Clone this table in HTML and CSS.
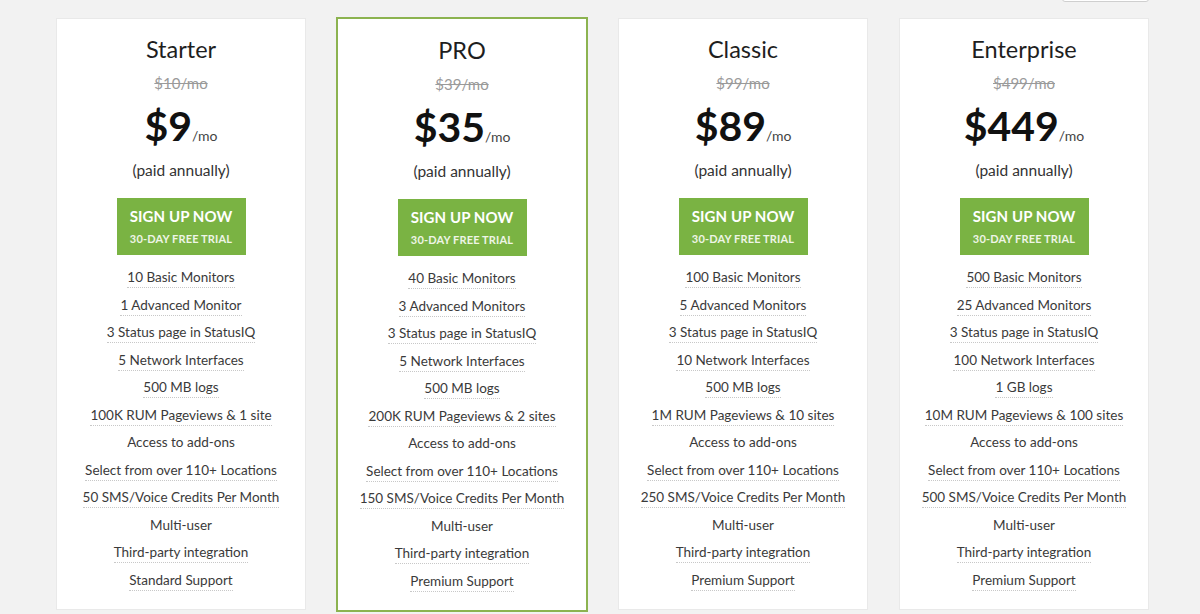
FILE: index.html
```html
<!DOCTYPE html>
<html>
<head>
<meta charset="utf-8">
<link rel="stylesheet" href="styles.css">
</head>
<body>
<div class="page">
  <div class="topbar"><div class="toggle"></div></div>
  <div class="plans">
    <div class="card">
      <div class="title">Starter</div>
      <div class="old">$10/mo</div>
      <div class="price"><span class="amt">$9</span><span class="per">/mo</span></div>
      <div class="paid">(paid annually)</div>
      <a class="btn"><span class="btn-main">SIGN UP NOW</span><span class="btn-sub">30-DAY FREE TRIAL</span></a>
      <ul class="feats">
        <li><span class="u">10 Basic Monitors</span></li>
        <li><span class="u">1 Advanced Monitor</span></li>
        <li><span class="u">3 Status page in StatusIQ</span></li>
        <li><span class="u">5 Network Interfaces</span></li>
        <li><span class="u">500 MB logs</span></li>
        <li><span class="u">100K RUM Pageviews &amp; 1 site</span></li>
        <li><span>Access to add-ons</span></li>
        <li><span class="u">Select from over 110+ Locations</span></li>
        <li><span class="u">50 SMS/Voice Credits Per Month</span></li>
        <li><span>Multi-user</span></li>
        <li><span class="u">Third-party integration</span></li>
        <li><span class="u">Standard Support</span></li>
      </ul>
    </div>
    <div class="card pro">
      <div class="title">PRO</div>
      <div class="old">$39/mo</div>
      <div class="price"><span class="amt">$35</span><span class="per">/mo</span></div>
      <div class="paid">(paid annually)</div>
      <a class="btn"><span class="btn-main">SIGN UP NOW</span><span class="btn-sub">30-DAY FREE TRIAL</span></a>
      <ul class="feats">
        <li><span class="u">40 Basic Monitors</span></li>
        <li><span class="u">3 Advanced Monitors</span></li>
        <li><span class="u">3 Status page in StatusIQ</span></li>
        <li><span class="u">5 Network Interfaces</span></li>
        <li><span class="u">500 MB logs</span></li>
        <li><span class="u">200K RUM Pageviews &amp; 2 sites</span></li>
        <li><span>Access to add-ons</span></li>
        <li><span class="u">Select from over 110+ Locations</span></li>
        <li><span class="u">150 SMS/Voice Credits Per Month</span></li>
        <li><span>Multi-user</span></li>
        <li><span class="u">Third-party integration</span></li>
        <li><span class="u">Premium Support</span></li>
      </ul>
    </div>
    <div class="card">
      <div class="title">Classic</div>
      <div class="old">$99/mo</div>
      <div class="price"><span class="amt">$89</span><span class="per">/mo</span></div>
      <div class="paid">(paid annually)</div>
      <a class="btn"><span class="btn-main">SIGN UP NOW</span><span class="btn-sub">30-DAY FREE TRIAL</span></a>
      <ul class="feats">
        <li><span class="u">100 Basic Monitors</span></li>
        <li><span class="u">5 Advanced Monitors</span></li>
        <li><span class="u">3 Status page in StatusIQ</span></li>
        <li><span class="u">10 Network Interfaces</span></li>
        <li><span class="u">500 MB logs</span></li>
        <li><span class="u">1M RUM Pageviews &amp; 10 sites</span></li>
        <li><span>Access to add-ons</span></li>
        <li><span class="u">Select from over 110+ Locations</span></li>
        <li><span class="u">250 SMS/Voice Credits Per Month</span></li>
        <li><span>Multi-user</span></li>
        <li><span class="u">Third-party integration</span></li>
        <li><span class="u">Premium Support</span></li>
      </ul>
    </div>
    <div class="card">
      <div class="title">Enterprise</div>
      <div class="old">$499/mo</div>
      <div class="price"><span class="amt">$449</span><span class="per">/mo</span></div>
      <div class="paid">(paid annually)</div>
      <a class="btn"><span class="btn-main">SIGN UP NOW</span><span class="btn-sub">30-DAY FREE TRIAL</span></a>
      <ul class="feats">
        <li><span class="u">500 Basic Monitors</span></li>
        <li><span class="u">25 Advanced Monitors</span></li>
        <li><span class="u">3 Status page in StatusIQ</span></li>
        <li><span class="u">100 Network Interfaces</span></li>
        <li><span class="u">1 GB logs</span></li>
        <li><span class="u">10M RUM Pageviews &amp; 100 sites</span></li>
        <li><span>Access to add-ons</span></li>
        <li><span class="u">Select from over 110+ Locations</span></li>
        <li><span class="u">500 SMS/Voice Credits Per Month</span></li>
        <li><span>Multi-user</span></li>
        <li><span class="u">Third-party integration</span></li>
        <li><span class="u">Premium Support</span></li>
      </ul>
    </div>
  </div>
</div>
</body>
</html>
```
FILE: styles.css
```css
* { box-sizing: border-box; }
html, body {
  margin: 0;
  padding: 0;
  background: #f2f2f2;
  height: 100%;
  overflow: hidden;
}
body {
  font-family: "Lato", "Open Sans", sans-serif;
  color: #2b2b2b;
}
.page {
  width: 1200px;
}
.topbar {
  height: 18px;
  display: flex;
  justify-content: flex-end;
  padding-right: 51px;
}
.toggle {
  width: 87px;
  height: 30px;
  margin-top: -28px;
  background: #fff;
  border: 1px solid #cfcfcf;
  border-radius: 3px;
}
.plans {
  display: flex;
  align-items: flex-start;
  gap: 30px;
  padding-left: 56px;
}
.card {
  width: 250px;
  height: 592px;
  background: #fff;
  border: 1px solid #e9e9e9;
  text-align: center;
  padding-top: 17px;
}
.card.pro {
  width: 252px;
  height: 595px;
  margin-top: -1px;
  border: 2px solid #8cb350;
  padding-top: 18px;
}
.card:last-child { margin-left: 1px; }
.title {
  font-size: 23.5px;
  line-height: 26px;
  color: #1e1e1e;
}
.old {
  margin-top: 11px;
  font-size: 15px;
  line-height: 20px;
  color: #9a9a9a;
  text-decoration: line-through;
}
.price {
  margin-top: 9px;
  line-height: 48px;
  height: 48px;
  color: #111;
}
.amt {
  font-size: 41px;
  font-weight: 700;
}
.per {
  font-size: 14px;
  color: #444;
}
.paid {
  margin-top: 10px;
  font-size: 15.5px;
  line-height: 20px;
  color: #333;
}
.btn {
  display: flex;
  flex-direction: column;
  align-items: center;
  width: 129px;
  height: 57px;
  margin: 18px auto 0;
  background: #7ab343;
  color: #fff;
  padding-top: 9px;
}
.btn-main {
  font-size: 15px;
  font-weight: 700;
  line-height: 18px;
  letter-spacing: 0.1px;
}
.btn-sub {
  margin-top: 7px;
  font-size: 11px;
  font-weight: 700;
  line-height: 14px;
  letter-spacing: 0.15px;
  color: #eef5e6;
}
.feats {
  list-style: none;
  margin: 9px 0 0;
  padding: 0;
}
.feats li {
  height: 27.5px;
  line-height: 27px;
  font-size: 13.5px;
  color: #3a3a3a;
}
.feats li span {
  display: inline-block;
  line-height: 18px;
  padding-bottom: 1px;
  border-bottom: 1px dotted transparent;
}
.feats li span.u {
  border-bottom-color: #c8c8c8;
}
```
